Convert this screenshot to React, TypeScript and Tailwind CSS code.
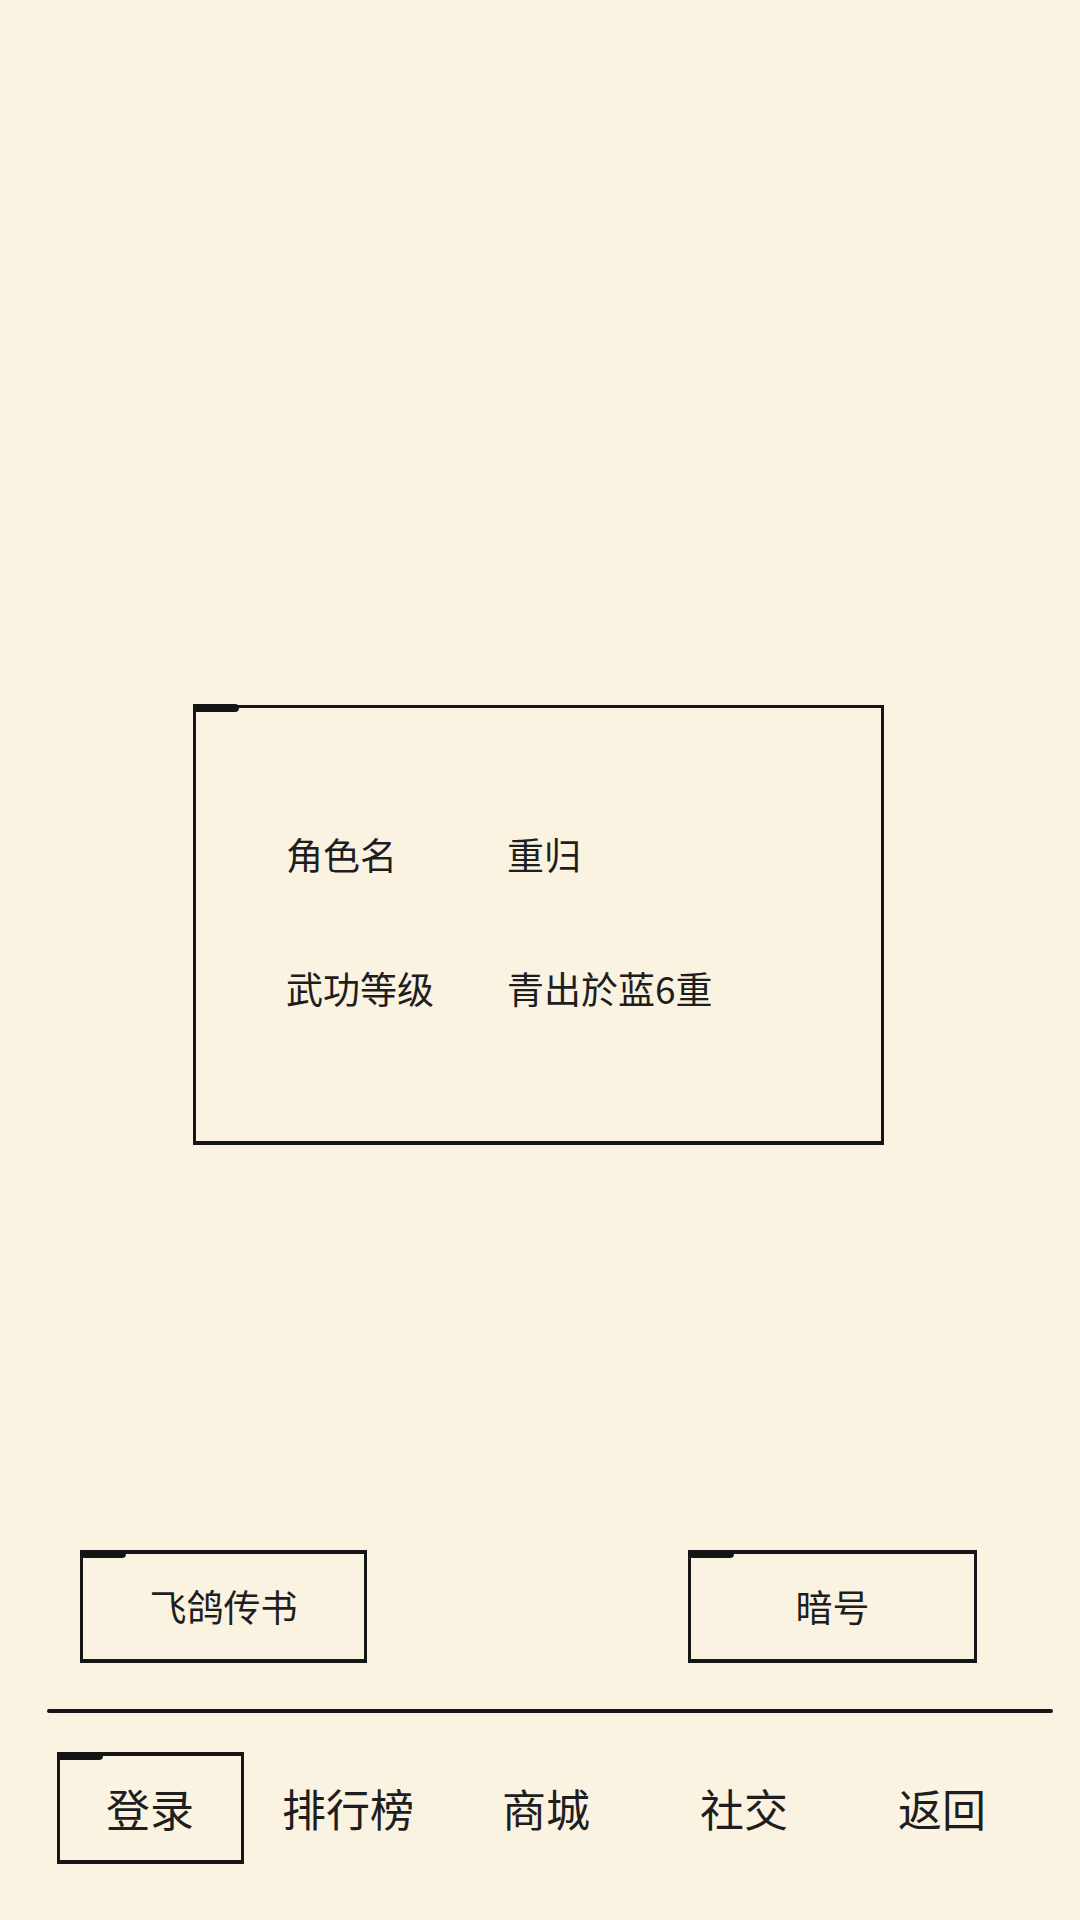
import React from "react";

const font = { fontFamily: '"Noto Sans CJK SC", "Noto Sans", sans-serif' };

function Row({ label, value }: { label: string; value: string }) {
  return (
    <div className="flex items-center h-[37px]">
      <div className="w-[221px] text-[37px] leading-[37px]">{label}</div>
      <div className="text-[37px] leading-[37px]">{value}</div>
    </div>
  );
}

function Stroke() {
  return (
    <span className="absolute -top-[4px] -left-[3px] w-[46px] h-[8px] bg-[#141414] rounded-r-full" />
  );
}

export default function App() {
  const tabs = ["登录", "排行榜", "商城", "社交", "返回"];
  return (
    <div
      className="w-[1080px] h-[1920px] bg-[#fbf3e2] text-[#1e1e1e] flex flex-col overflow-hidden"
      style={font}
    >
      {/* info box */}
      <div className="relative mt-[705px] ml-[193px] w-[691px] h-[440px] border-[3px] border-b-[4px] border-[#161616] flex flex-col pl-[90px] pt-[128px] gap-[97px]">
        <Stroke />
        <Row label="角色名" value="重归" />
        <Row label="武功等级" value="青出於蓝6重" />
      </div>

      {/* action buttons */}
      <div className="mt-[405px] flex justify-between pl-[80px] pr-[103px]">
        <div className="relative w-[287px] h-[113px] border-[3px] border-t-[4px] border-b-[4px] border-[#161616] flex items-center justify-center text-[37px]">
          <Stroke />
          飞鸽传书
        </div>
        <div className="relative w-[289px] h-[113px] border-[3px] border-t-[4px] border-b-[4px] border-[#161616] flex items-center justify-center text-[37px]">
          <Stroke />
          暗号
        </div>
      </div>

      {/* divider */}
      <div className="mt-[46px] ml-[47px] w-[1006px] h-[4px] bg-[#161616] rounded-full" />

      {/* tabs */}
      <div className="mt-[39px] ml-[51px] flex">
        {tabs.map((t, i) => (
          <div key={t} className="w-[198px] h-[112px] flex items-center justify-center">
            {i === 0 ? (
              <div className="relative w-[187px] h-[112px] border-[3px] border-t-[4px] border-b-[4px] border-[#161616] flex items-center justify-center text-[44px]">
                <Stroke />
                {t}
              </div>
            ) : (
              <div className="text-[44px]">{t}</div>
            )}
          </div>
        ))}
      </div>
    </div>
  );
}
